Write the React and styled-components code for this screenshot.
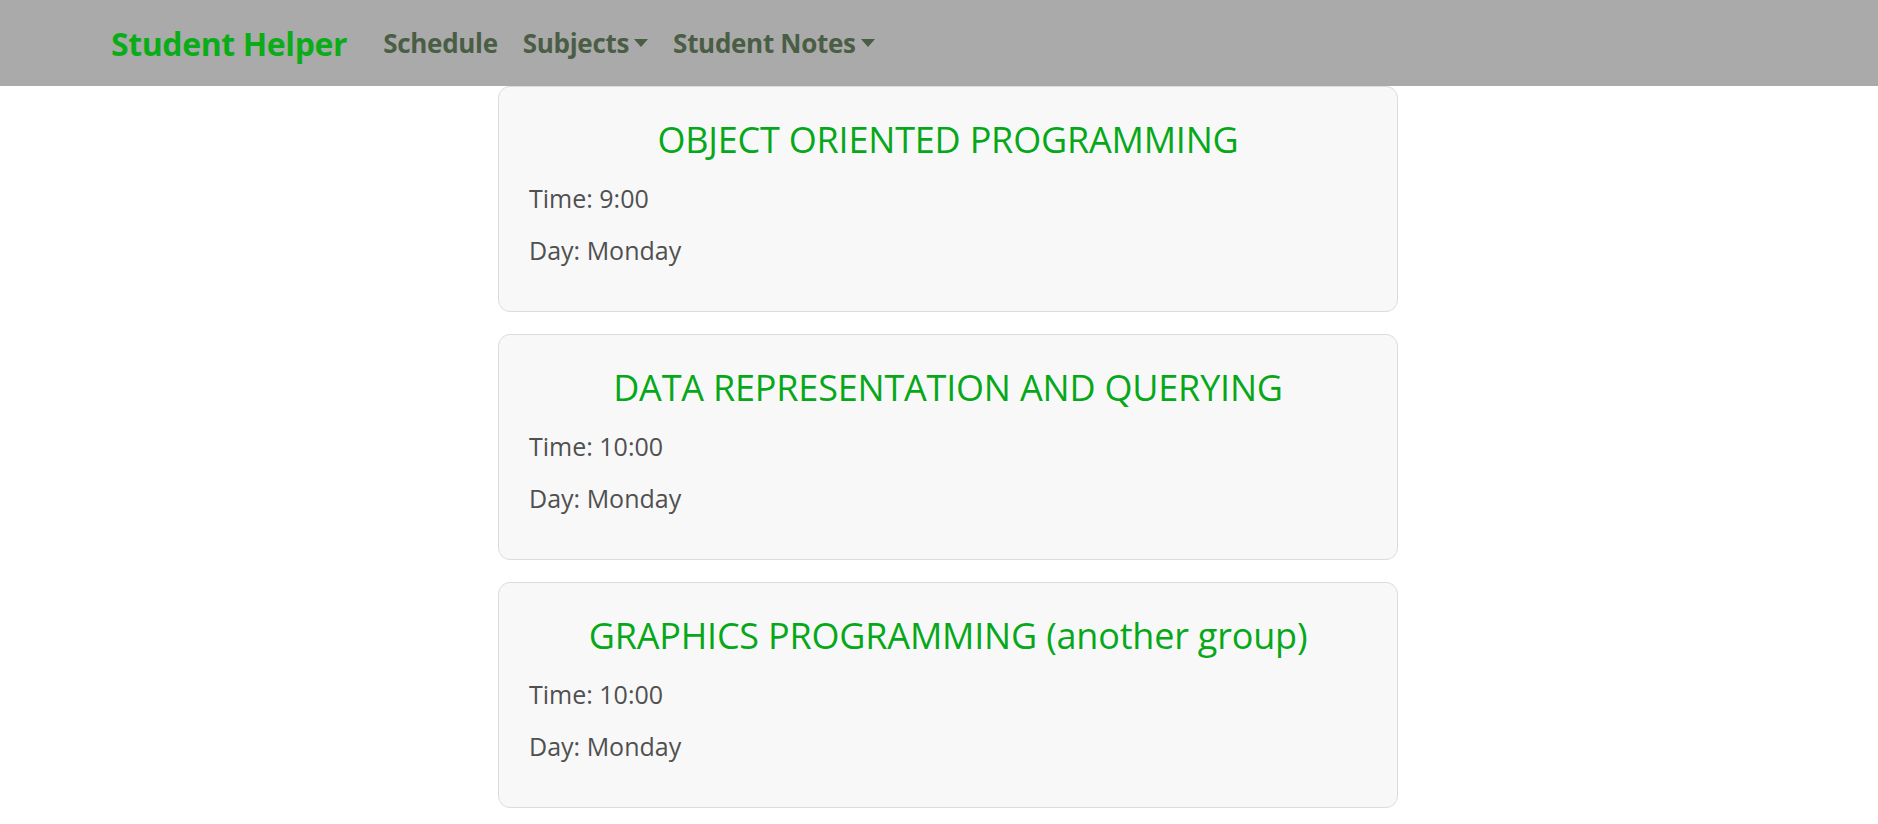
import React from "react";
import styled, { createGlobalStyle } from "styled-components";

const GlobalStyle = createGlobalStyle`
  body {
    margin: 0;
    background: #ffffff;
    font-family: "Open Sans", "Noto Sans", Arial, sans-serif;
  }
`;

const subjects = [
  { name: "OBJECT ORIENTED PROGRAMMING", time: "9:00", day: "Monday" },
  { name: "DATA REPRESENTATION AND QUERYING", time: "10:00", day: "Monday" },
  { name: "GRAPHICS PROGRAMMING (another group)", time: "10:00", day: "Monday" },
];

const App = () => {
  return (
    <>
      <GlobalStyle />
      <Navbar>
        <Brand href="#">Student Helper</Brand>
        <NavList>
          <NavLink href="#">Schedule</NavLink>
          <NavLink href="#" $dropdown>
            Subjects
          </NavLink>
          <NavLink href="#" $dropdown>
            Student Notes
          </NavLink>
        </NavList>
      </Navbar>
      <Main>
        {subjects.map((subject, index) => (
          <Card key={index}>
            <CardTitle>{subject.name}</CardTitle>
            <CardText>Time: {subject.time}</CardText>
            <CardText>Day: {subject.day}</CardText>
          </Card>
        ))}
      </Main>
    </>
  );
};

export default App;

const Navbar = styled.nav`
  display: flex;
  align-items: center;
  height: 86px;
  padding: 0 0 0 111px;
  background-color: #aaaaaa;
`;

const Brand = styled.a`
  color: #0aad18;
  font-size: 32px;
  font-weight: 700;
  text-decoration: none;
  margin-right: 36px;
  letter-spacing: -0.4px;
`;

const NavList = styled.div`
  display: flex;
  align-items: center;
  gap: 25px;
`;

const NavLink = styled.a`
  display: flex;
  align-items: center;
  color: #4a5d45;
  font-size: 26px;
  font-weight: 700;
  text-decoration: none;
  letter-spacing: -0.3px;

  &::after {
    content: ${(props) => (props.$dropdown ? '""' : "none")};
    margin-left: 5px;
    border-top: 8px solid #4a5d45;
    border-left: 7px solid transparent;
    border-right: 7px solid transparent;
  }
`;

const Main = styled.main`
  display: flex;
  flex-direction: column;
  align-items: center;
  gap: 22px;
  padding-left: 18px;
`;

const Card = styled.section`
  box-sizing: border-box;
  width: 900px;
  padding: 31px 30px 46px;
  background-color: #f8f8f8;
  border: 1px solid #dcdcdc;
  border-radius: 12px;
`;

const CardTitle = styled.h3`
  margin: 0 0 21px;
  color: #06a81a;
  font-size: 36px;
  font-weight: 500;
  line-height: 44px;
  text-align: center;
  letter-spacing: -0.2px;
`;

const CardText = styled.p`
  margin: 0;
  color: #505050;
  font-size: 25px;
  line-height: 30px;

  & + & {
    margin-top: 22px;
  }
`;
